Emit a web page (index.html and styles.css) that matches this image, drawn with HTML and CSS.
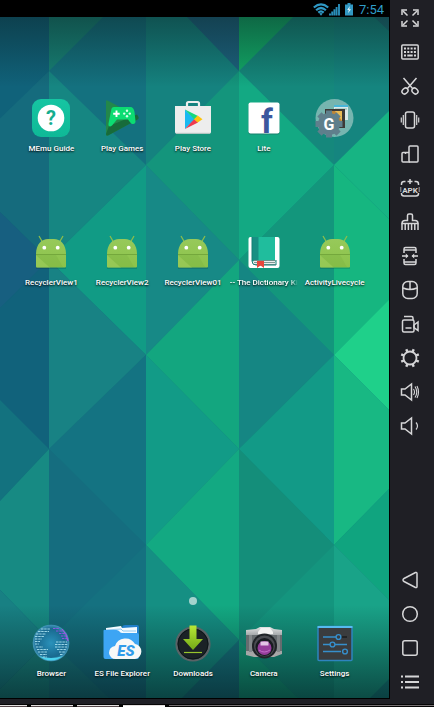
FILE: index.html
```html
<!DOCTYPE html>
<html lang="en">
<head>
<meta charset="utf-8">
<meta name="viewport" content="width=device-width, initial-scale=1">
<title>Home screen</title>
<link rel="stylesheet" href="styles.css">
</head>
<body>
<svg class="defs" aria-hidden="true">
  <defs>
    <linearGradient id="droid-fill" x1="0" y1="0" x2="0" y2="1">
      <stop offset="0" stop-color="#97c95a"/><stop offset="1" stop-color="#8bc34a"/>
    </linearGradient>
    <symbol id="droid" viewBox="0 0 40 40">
      <path d="M5 36h30" stroke="#000" stroke-opacity=".25" stroke-width="1"/>
      <path d="M8 4l4 7M32 4l-4 7" stroke="#8bbd4c" stroke-width="1.300" fill="none"/>
      <path d="M5 22C5 12 11 7 17 7h6c6 0 12 5 12 15v12.500a1 1 0 0 1-1 1H6a1 1 0 0 1-1-1z" fill="url(#droid-fill)"/>
      <path d="M5 23l14 12.500H6a1 1 0 0 1-1-1z" fill="#9ccc5c" opacity=".6"/>
      <path d="M5 23h20l7 12H18z" fill="#7cb342" opacity=".35"/>
      <path d="M5 22.500h30" stroke="#74a83c" stroke-width="1"/>
      <circle cx="13.300" cy="15.700" r="1.900" fill="#fff"/><circle cx="26.700" cy="15.700" r="1.900" fill="#fff"/>
    </symbol>
  </defs>
</svg>

<div class="emulator">
  <main class="phone">
    <header class="status">
      <svg class="status-wifi" viewBox="0 0 16 13" aria-label="Wi-Fi">
        <g fill="none" stroke="#2f98c4" stroke-width="2.200"><path d="M.8 4.500Q8-1.800 15.200 4.500"/><path d="M3.100 7.200Q8 2.800 12.900 7.200"/><path d="M5.300 9.600Q8 7.200 10.700 9.600"/></g>
        <path d="M6.300 10.600Q8 9.600 9.700 10.600L8 12.800z" fill="#2f98c4"/>
      </svg>
      <svg class="status-signal" viewBox="0 0 12 13" aria-label="Signal">
        <path d="M1 12.500v-2M3.200 12.500V8.500M5.400 12.500V6.300M7.600 12.500V4M10 12.500V1" stroke="#2a8fba" stroke-width="1.900"/>
      </svg>
      <svg class="status-battery" viewBox="0 0 8 13" aria-label="Battery charging">
        <path d="M2.500 0h3v1.500H8V12.500H0V1.500h2.500z" fill="#3298c3"/><path d="M4.800 3L2.200 7h1.600L3 10.300 6 6.300H4.300z" fill="#dff3fa"/>
      </svg>
      <time class="status-time">7:54</time>
    </header>

    <div class="home">
      <svg class="wallpaper" viewBox="0 17 389 681" preserveAspectRatio="none" aria-hidden="true">
        <defs>
          <linearGradient id="shade-top" x1="0" y1="0" x2="0" y2="1"><stop offset="0" stop-color="#0a1a1c" stop-opacity=".46"/><stop offset="1" stop-color="#0a1a1c" stop-opacity="0"/></linearGradient>
          <linearGradient id="shade-bottom" x1="0" y1="0" x2="0" y2="1"><stop offset="0" stop-color="#04161c" stop-opacity="0"/><stop offset="1" stop-color="#04161c" stop-opacity=".62"/></linearGradient>
        </defs>
        <rect y="17" width="49" height="681" fill="#10627a"/>
        <path d="M49 71V260L-48 165z" fill="#156b7d"/>
        <path d="M0 212V308L49 260z" fill="#175f80"/>
        <path d="M49 260V449L0 401V308z" fill="#11627b"/>
        <path d="M0 400V501L49 449z" fill="#13727f"/>
        <path d="M49 449V640L0 590V501z" fill="#178a83"/>
        <path d="M0 590V689L49 640z" fill="#188083"/>
        <path d="M49 640V698H0V689z" fill="#19857f"/>

        <rect x="49" y="17" width="97" height="681" fill="#14717f"/>
        <path d="M49 17H103L49 71z" fill="#178276"/>
        <path d="M49 71V260L146 165z" fill="#168682"/>
        <path d="M146 165V355L49 260z" fill="#119b85"/>
        <path d="M49 260V449L146 355z" fill="#188284"/>
        <path d="M146 355V545L49 449z" fill="#147382"/>
        <path d="M49 449V640L146 545z" fill="#156d7f"/>
        <path d="M146 545V698H109L49 640z" fill="#157180"/>
        <path d="M49 640V698H109z" fill="#18787f"/>

        <rect x="146" y="17" width="93" height="681" fill="#15827f"/>
        <path d="M187 17H239V71z" fill="#1c637f"/>
        <path d="M239 71V260L146 165z" fill="#14957c"/>
        <path d="M146 165V355L239 260z" fill="#178986"/>
        <path d="M239 260V449L146 355z" fill="#13a67f"/>
        <path d="M146 355V545L239 449z" fill="#129b87"/>
        <path d="M239 449V640L146 545z" fill="#13a982"/>
        <path d="M146 545V698H182L239 640z" fill="#158f83"/>
        <path d="M239 640V698H182z" fill="#16757f"/>

        <rect x="239" y="17" width="95" height="681" fill="#15887c"/>
        <path d="M239 17H293L239 71z" fill="#12ab68"/>
        <path d="M239 71V260L334 165z" fill="#13a983"/>
        <path d="M334 165V355L239 260z" fill="#13967c"/>
        <path d="M239 260V449L334 355z" fill="#158683"/>
        <path d="M334 355V545L239 449z" fill="#129a87"/>
        <path d="M239 449V640L334 545z" fill="#148e7a"/>
        <path d="M334 545V698H298L239 640z" fill="#14957e"/>
        <path d="M239 640V698H298z" fill="#13a17b"/>

        <rect x="334" y="17" width="56" height="681" fill="#15857f"/>
        <path d="M374 17H390V32z" fill="#1b6f77"/>
        <path d="M334 165L390 110V220z" fill="#17b483"/>
        <path d="M334 165L390 220V300L334 355z" fill="#16b680"/>
        <path d="M334 355L390 299V411z" fill="#1fd08a"/>
        <path d="M334 355L390 411V488L334 545z" fill="#18b883"/>
        <path d="M334 545L390 488V601z" fill="#10a47f"/>
        <path d="M334 545L390 601V678L370 698H334z" fill="#19a388"/>
        <rect y="17" width="390" height="70" fill="url(#shade-top)"/>
        <rect y="605" width="390" height="93" fill="url(#shade-bottom)"/>
      </svg>

      <section class="apps" aria-label="Apps">
        <button class="app" type="button">
          <svg class="app-icon" viewBox="0 0 40 40"><defs><linearGradient id="memu" x1="0" y1="0" x2="0" y2="1"><stop offset="0" stop-color="#16c5a2"/><stop offset="1" stop-color="#0fb997"/></linearGradient></defs><rect x="1" y="1" width="38" height="38" rx="9" fill="url(#memu)"/><circle cx="20" cy="20" r="13.300" fill="#fff"/><text class="glyph-help" x="20" y="27" text-anchor="middle">?</text></svg>
          <span class="app-label">MEmu Guide</span>
        </button>
        <button class="app" type="button">
          <svg class="app-icon" viewBox="0 0 40 40"><path d="M4 3.500Q4 1.500 6 2.700L35.500 18.500Q37.500 20 35.500 21.500L6 37.500Q4 38.500 4 36.500z" fill="#23874a"/><path d="M7 28L35 16.500Q38 20 35.500 21.500L6 37.500Q4 38 4 36z" fill="#176b3a"/><path d="M12 9h16c3 0 4 2 4.500 5l1 9c.3 4-4 4-6 .500l-1.500-2H15l-5 6c-2 2-4 1-3.500-2L9 13c.5-3 1-4 3-4z" fill="#0cdc72"/><path d="M14.500 12.500v6.500M11.200 15.700h6.500" stroke="#fff" stroke-width="1.900"/><g fill="#d6ffe8"><circle cx="25" cy="12.800" r="1.200"/><circle cx="25" cy="18.300" r="1.200"/><circle cx="22.200" cy="15.600" r="1.200"/><circle cx="27.800" cy="15.600" r="1.200"/></g></svg>
          <span class="app-label">Play Games</span>
        </button>
        <button class="app" type="button">
          <svg class="app-icon" viewBox="0 0 40 40"><path d="M14 8V5.500Q14 4 15.500 4h9Q26 4 26 5.500V8" fill="none" stroke="#eee" stroke-width="2.200"/><path d="M2 8h36v26q0 1.500-1.500 1.500h-33Q2 35.500 2 34z" fill="#ededed"/><path d="M3 35.300h34" stroke="#bfc6c5" stroke-width="1"/><path d="M12 11.500v19.500l10-9.800z" fill="#19b9f1"/><path d="M12 11.500l13 6.500-3.700 3.600z" fill="#16d77d"/><path d="M12 31l13-6.500-3.700-3.600z" fill="#ef3b4e"/><path d="M24.700 17.500l4.800 3.700-4.800 3.400-3.700-3.400z" fill="#fdc40d"/></svg>
          <span class="app-label">Play Store</span>
        </button>
        <button class="app" type="button">
          <svg class="app-icon" viewBox="0 0 40 40"><rect x="4.500" y="5.500" width="31" height="31" rx="2" fill="#234" opacity=".35"/><rect x="4.500" y="4.500" width="31" height="31" rx="2" fill="#fff"/><text class="glyph-lite" x="17" y="35">f</text></svg>
          <span class="app-label">Lite</span>
        </button>
        <button class="app" type="button" aria-label="Folder">
          <svg class="app-icon" viewBox="0 0 40 40"><circle cx="19.500" cy="20" r="19" fill="#86bdb8" opacity=".86"/><path d="M19 7h14v15H19z" fill="#dce9ea"/><path d="M19 7h14v2H19z" fill="#48b6d8"/><path d="M20 11h12" stroke="#8ba" stroke-width="1"/><path d="M10 11h20v19H10z" fill="#3c3936"/><path d="M12 13h15v14H12z" fill="#bb8538"/><path d="M20 13h7v10z" fill="#e8ba55"/>
          <g transform="translate(14 26)" fill="#5f7f8c"><circle r="11"/><path id="teeth" d="M-3-13.500h6v27h-6z"/><use href="#teeth" transform="rotate(45)"/><use href="#teeth" transform="rotate(90)"/><use href="#teeth" transform="rotate(135)"/><text class="glyph-g" y="6" text-anchor="middle">G</text></g></svg>
          <span class="app-label"></span>
        </button>
        <button class="app" type="button"><svg class="app-icon"><use href="#droid"/></svg><span class="app-label">RecyclerView1</span></button>
        <button class="app" type="button"><svg class="app-icon"><use href="#droid"/></svg><span class="app-label">RecyclerView2</span></button>
        <button class="app" type="button"><svg class="app-icon"><use href="#droid"/></svg><span class="app-label">RecyclerView01</span></button>
        <button class="app" type="button">
          <svg class="app-icon" viewBox="0 0 40 40"><rect x="4.500" y="5" width="31" height="31" rx="2" fill="#fff"/><path d="M8 5h24v24.500H8z" fill="#20bd9d"/><path d="M8 5h6.500v24H8z" fill="#178f83"/><path d="M31.500 5v24" stroke="#fff" stroke-width="1"/><path d="M10 28.500h21v4H10q-1.500-2 0-4z" fill="#e9edec"/><path d="M10 28.500h21.500M10 30.500h21M9.500 32.500h22" stroke="#64807d" stroke-width=".8"/><path d="M8 5v24q0 4 4 4h20V28" fill="none" stroke="#147e75" stroke-width="1"/><path d="M13 29h7v7l-3.500-2.500L13 36z" fill="#e8463c"/></svg>
          <span class="app-label app-label-long">-- The Dictionary Ki</span>
        </button>
        <button class="app" type="button"><svg class="app-icon"><use href="#droid"/></svg><span class="app-label">ActivityLivecycle</span></button>
      </section>

      <div class="pager"><span class="pager-dot"></span></div>

      <nav class="dock" aria-label="Dock">
        <button class="app" type="button">
          <svg class="app-icon" viewBox="0 0 40 40"><defs><radialGradient id="globe" cx=".5" cy=".5" r=".52"><stop offset="0" stop-color="#2a92bb"/><stop offset=".75" stop-color="#19698f"/><stop offset="1" stop-color="#4a9fc2"/></radialGradient></defs><circle cx="20" cy="20" r="18.300" fill="url(#globe)"/><path d="M8 33Q20 42 32 33Q20 37 8 33" fill="#4ad3ee"/><g fill="none" stroke="#9bd6e7" stroke-width="1" stroke-dasharray="2.500 .7"><path d="M10 6h9M7 8.500h11M5 11h10M4 13.500h9M4 16h7M4 18.500h5M4 21h4M5 24h7M6 26.500h11M7 29h9M9 31.500h7M12 34h4"/><path d="M25 19h11M24 21.500h13M24 24h12M26 26.500h9M28 29h6M29 31.500h3"/></g><path d="M22 5.500h6M25 8h7M28 10.500h6M30 13h6M31 15.500h6" stroke="#8c55df" stroke-width="1.200" stroke-dasharray="2.500 .8"/><path d="M31 6q5 5 6 12" stroke="#ad4de5" fill="none" stroke-width="1"/></svg>
          <span class="app-label">Browser</span>
        </button>
        <button class="app" type="button">
          <svg class="app-icon" viewBox="0 0 40 40"><path d="M20 4q1-2 3-2h12q2 0 2 2v30H15z" fill="#217fca"/><path d="M4 5l15-2 1 2 15-1v8H4z" fill="#f4fbff"/><path d="M4 7l15-1 2 2h13" fill="none" stroke="#92c9ef" stroke-width="1"/><path d="M1.500 8Q1.500 6 3.500 7h11q2 0 3 1.500t3 1.500H35q2 0 2 2v22q0 2-2 2H3.500q-2 0-2-2z" fill="#3da5f4"/><path d="M14 36a6.500 6.500 0 0 1-1-13 11 11 0 0 1 20-2 7.600 7.600 0 0 1 0 15z" fill="#f7f8f7"/><text class="glyph-es" x="24" y="33" text-anchor="middle">ES</text></svg>
          <span class="app-label">ES File Explorer</span>
        </button>
        <button class="app" type="button">
          <svg class="app-icon" viewBox="0 0 40 40"><defs><linearGradient id="arrow" x1="0" y1="0" x2="0" y2="1"><stop offset="0" stop-color="#b8e936"/><stop offset="1" stop-color="#72a917"/></linearGradient></defs><circle cx="20" cy="21" r="16.500" fill="#1b2226" stroke="#596366" stroke-width="2.200"/><circle cx="20" cy="21" r="15" fill="none" stroke="#0e1518" stroke-width="1"/><path d="M16.500 2.500h7V16H30L20 27 10 16h6.500z" fill="url(#arrow)"/><path d="M11 29.500h18" stroke="#98c52c" stroke-width="1.200"/></svg>
          <span class="app-label">Downloads</span>
        </button>
        <button class="app" type="button">
          <svg class="app-icon" viewBox="0 0 40 40"><defs><linearGradient id="cam" x1="0" y1="0" x2="0" y2="1"><stop offset="0" stop-color="#e1e2e2"/><stop offset=".35" stop-color="#92979a"/><stop offset="1" stop-color="#aaa9a9"/></linearGradient></defs><path d="M2 7l10-1 4-2h10l4 2 8 1v24l-8 3H10l-8-2z" fill="url(#cam)"/><path d="M2 12h36v16H2z" fill="#666c6f"/><path d="M5 12h3v17H5zM33 12h3v17h-3z" fill="#83888a"/><path d="M14 9l3-4h9l3 4v2H14z" fill="#f2f2f1"/><circle cx="20.500" cy="23" r="12.500" fill="#1f2327"/><circle cx="20.500" cy="23" r="10.500" fill="#4a4c51"/><circle cx="20.500" cy="24" r="9" fill="#181b20"/><circle cx="20.500" cy="25" r="7" fill="#963d9b"/><path d="M16.500 18.500h8v4h-8z" fill="#e3c4e5"/><path d="M15 27q5 4 11 0" stroke="#c26cc8" fill="none"/></svg>
          <span class="app-label">Camera</span>
        </button>
        <button class="app" type="button">
          <svg class="app-icon" viewBox="0 0 40 40"><rect x="3" y="3.500" width="34" height="34" rx="1" fill="#3a3c3e" stroke="#2e84bf" stroke-width="1.500"/><path d="M2.500 4h35" stroke="#55baf0" stroke-width="2"/><g stroke="#368fcc" stroke-width="1.400" fill="none"><path d="M8 14h13M8 21.500h7M20 21.500h12M8 28.500h18"/><path d="M26 14h6" stroke="#191b1d"/><circle cx="23.500" cy="14" r="2.400"/><circle cx="17.500" cy="21.500" r="2.400"/><circle cx="30" cy="28.500" r="2.400"/></g></svg>
          <span class="app-label">Settings</span>
        </button>
      </nav>
    </div>
  </main>

  <aside class="toolbar" aria-label="Emulator tools">
    <button class="tool" type="button" aria-label="Full screen"><svg class="tool-icon" viewBox="0 0 20 20"><path d="M7.500 7.500L3 3M12.500 7.500L17 3M7.500 12.500L3 17M12.500 12.500L17 17"/><path d="M2 7V2h5M13 2h5v5M18 13v5h-5M7 18H2v-5"/></svg></button>
    <button class="tool" type="button" aria-label="Keyboard"><svg class="tool-icon" viewBox="0 0 20 20"><rect x="1.800" y="3" width="16.400" height="14" rx="1"/><path d="M4 6.500h12M4 10h12" stroke-width="2" stroke-dasharray="2 1.300"/><path d="M4 13.500h2M7.300 13.500h5.400M14 13.500h2" stroke-width="2"/></svg></button>
    <button class="tool" type="button" aria-label="Screenshot"><svg class="tool-icon" viewBox="0 0 20 20"><path d="M3.500 2l9.500 11M16.500 2L7 13"/><ellipse cx="5" cy="15" rx="3.300" ry="2.600" transform="rotate(-45 5 15)"/><ellipse cx="15" cy="15" rx="3.300" ry="2.600" transform="rotate(45 15 15)"/></svg></button>
    <button class="tool" type="button" aria-label="Shake"><svg class="tool-icon" viewBox="0 0 20 20"><rect x="5.500" y="2" width="9" height="16" rx="2"/><path d="M3.300 5v10M16.700 5v10M1.300 7.500v5M18.700 7.500v5" stroke-width="1.200"/></svg></button>
    <button class="tool" type="button" aria-label="Rotate"><svg class="tool-icon" viewBox="0 0 20 20"><rect x="9" y="2" width="9" height="16" rx="1"/><path d="M9 8.500H3q-1 0-1 1V17q0 1 1 1h7M5.500 8.500V10"/></svg></button>
    <button class="tool" type="button" aria-label="Install APK"><svg class="tool-icon" viewBox="0 0 20 20"><path d="M5.500 3.500H4Q1.500 3.500 1.500 6v1M14.500 3.500H16q2.500 0 2.500 2.500v1M10 1v5M7.500 3.500h5M1.500 15v.500q0 2.500 2.500 2.500h12q2.500 0 2.500-2.500V15"/><path d="M.8 9v5M19.200 9v5" stroke-width=".7"/><text class="glyph-apk" x="10" y="15" text-anchor="middle">APK</text></svg></button>
    <button class="tool" type="button" aria-label="Clean"><svg class="tool-icon" viewBox="0 0 20 20"><path d="M2 11.500Q2 8.500 5 8.500h2.500V3.500Q7.500 2 9 2h2q1.500 0 1.500 1.500v5H15q3 0 3 3z"/><path d="M2 11.500V18M5.200 12v6M8.400 12v6M11.600 12v6M14.800 12v6M18 11.500V18"/></svg></button>
    <button class="tool" type="button" aria-label="Split window"><svg class="tool-icon" viewBox="0 0 20 20"><path d="M4 7V3q0-1.500 1.500-1.500h9Q16 1.500 16 3v4M4 13v4q0 1.500 1.500 1.500h9q1.500 0 1.500-1.500v-4M4 4h12M4 16h12M2 10h5.500M18 10h-5.500"/><path d="M5.800 7.500L8.500 10l-2.700 2.500zM14.200 7.500L11.500 10l2.700 2.500z" fill="#d6d6d8" stroke="none"/></svg></button>
    <button class="tool" type="button" aria-label="Mouse"><svg class="tool-icon" viewBox="0 0 20 20"><rect x="2.800" y="1.500" width="14.400" height="17" rx="5"/><path d="M3 8q7 3 14 0M10 2v7"/></svg></button>
    <button class="tool" type="button" aria-label="Record"><svg class="tool-icon" viewBox="0 0 20 20"><rect x="2.500" y="6" width="11.500" height="12" rx="1.500"/><path d="M4 2.500h7.500q1.500 0 1.500 1.500v2M5.500 14h6M14 11l4-3v8.500l-4-3z"/></svg></button>
    <button class="tool" type="button" aria-label="Settings"><svg class="tool-icon" viewBox="0 0 20 20"><circle cx="10" cy="10" r="6.500" stroke-width="1.800"/><path d="M6.300 1.200l1 2.500M13.700 1.200l-1 2.500M6.300 18.800l1-2.500M13.700 18.800l-1-2.500M1.200 6.300l2.500 1M18.800 6.300l-2.500 1M1.200 13.700l2.500-1M18.800 13.700l-2.500-1" stroke-width="2.400"/></svg></button>
    <button class="tool" type="button" aria-label="Volume up"><svg class="tool-icon" viewBox="0 0 20 20"><path d="M1.500 7H5l6.500-5v16L5 13H1.500z"/><path d="M13.500 7q2 3 0 6M15 4.500q3.500 5.500 0 11M17 4q3 6 0 12" stroke-width="1.100"/></svg></button>
    <button class="tool" type="button" aria-label="Volume down"><svg class="tool-icon" viewBox="0 0 20 20"><path d="M1.500 7H5l6.500-5v16L5 13H1.500z"/><path d="M16 6.500q3 3.500 0 7" stroke-width="1.200"/></svg></button>
    <button class="tool tool-back" type="button" aria-label="Back"><svg class="tool-icon" viewBox="0 0 20 20"><path d="M3 10Q3 9 4 8.500L15.500 2.500q1.500-.5 1.500 1v13q0 1.500-1.500 1L4 11.500Q3 11 3 10z"/></svg></button>
    <button class="tool" type="button" aria-label="Home"><svg class="tool-icon" viewBox="0 0 20 20"><circle cx="10" cy="10" r="7.300"/></svg></button>
    <button class="tool" type="button" aria-label="Recent apps"><svg class="tool-icon" viewBox="0 0 20 20"><rect x="2.800" y="2.800" width="14.400" height="14.400" rx="2"/></svg></button>
    <button class="tool" type="button" aria-label="Menu"><svg class="tool-icon" viewBox="0 0 20 20"><path d="M1 4.500h2M5 4.500h14M1 10h2M5 10h14M1 15.500h2M5 15.500h14" stroke-width="1.800"/></svg></button>
  </aside>
</div>
<footer class="taskbar">
  <span class="task task-first"></span><span class="task"></span><span class="task"></span><span class="task task-active"></span><span class="task-rest"></span>
</footer>
</body>
</html>
```
FILE: styles.css
```css
* {
  box-sizing: border-box;
}

body {
  margin: 0;
  min-height: 100vh;
  display: flex;
  flex-direction: column;
  background: #1f1f25;
  font-family: Roboto, sans-serif;
}

.defs {
  display: block;
  width: 0;
  height: 0;
}

.emulator {
  flex: 1;
  display: flex;
}

.phone {
  flex: 1;
  min-width: 0;
  display: flex;
  flex-direction: column;
  border-right: 1px solid #000;
  border-bottom: 1px solid #000;
}

.status {
  height: 17px;
  display: flex;
  justify-content: flex-end;
  align-items: center;
  padding: 2px 5px 0 0;
  background: #000;
}

.status-wifi {
  width: 16px;
  height: 13px;
}

.status-signal {
  width: 12px;
  height: 13px;
}

.status-battery {
  width: 8px;
  height: 13px;
  margin-left: 4px;
}

.status-time {
  margin-left: 6px;
  color: #2f9dc9;
  font-size: 13px;
  line-height: 15px;
}

.home {
  flex: 1;
  position: relative;
  display: flex;
  flex-direction: column;
  padding: 81px 19px 17px 16px;
}

.wallpaper {
  position: absolute;
  inset: 0;
  width: 100%;
  height: 100%;
}

.apps,
.dock {
  position: relative;
  display: grid;
  grid-template-columns: repeat(5, minmax(0, 1fr));
}

.apps {
  row-gap: 76px;
}

.app {
  display: flex;
  flex-direction: column;
  align-items: center;
  gap: 4px;
  min-width: 0;
  padding: 0;
  border: 0;
  background: none;
  color: #fff;
  font: inherit;
}

.app-icon {
  width: 40px;
  height: 40px;
}

.app-label {
  height: 14px;
  font-size: 8px;
  font-weight: 500;
  line-height: 14px;
  white-space: nowrap;
  text-shadow: 0 1px 2px #000;
}

.app-label-long {
  -webkit-mask-image: linear-gradient(to right, #000 88%, transparent);
  mask-image: linear-gradient(to right, #000 88%, transparent);
}

.pager {
  position: relative;
  display: flex;
  justify-content: center;
  margin-top: auto;
  margin-bottom: 18px;
}

.pager-dot {
  width: 8px;
  height: 8px;
  border-radius: 50%;
  background: #a3d3cd;
}

.toolbar {
  width: 44px;
  display: flex;
  flex-direction: column;
  padding: 1px 4px 0 0;
  background: #1f1f25;
}

.tool {
  display: flex;
  justify-content: center;
  align-items: center;
  height: 34px;
  padding: 0;
  border: 0;
  background: none;
}

.tool-back {
  margin-top: auto;
}

.tool-icon {
  width: 20px;
  height: 20px;
  fill: none;
  stroke: #d6d6d8;
  stroke-width: 1.5;
}

.taskbar {
  height: 8px;
  display: flex;
  gap: 4px;
  padding-top: 6px;
  background: linear-gradient(#1f1f25 5px, #050505 5px);
}

.task {
  width: 42px;
  border-top: 1px solid #e4e0e0;
  background: #55484b;
}

.task-first {
  width: 27px;
}

.task-active {
  background: #fff;
}

.task-rest {
  flex: 1;
  border-top: 1px solid #777174;
}

.glyph-help {
  fill: #15ad8f;
  font: bold 20px Roboto, sans-serif;
}

.glyph-lite {
  fill: #3b579d;
  font: bold 33px Roboto, sans-serif;
}

.glyph-g {
  fill: #fff;
  font: bold 16px Roboto, sans-serif;
}

.glyph-es {
  fill: #2f9bea;
  font: italic 900 15px Roboto, sans-serif;
}

.glyph-apk {
  fill: #d6d6d8;
  stroke: none;
  font: bold 8px Roboto, sans-serif;
}
```
